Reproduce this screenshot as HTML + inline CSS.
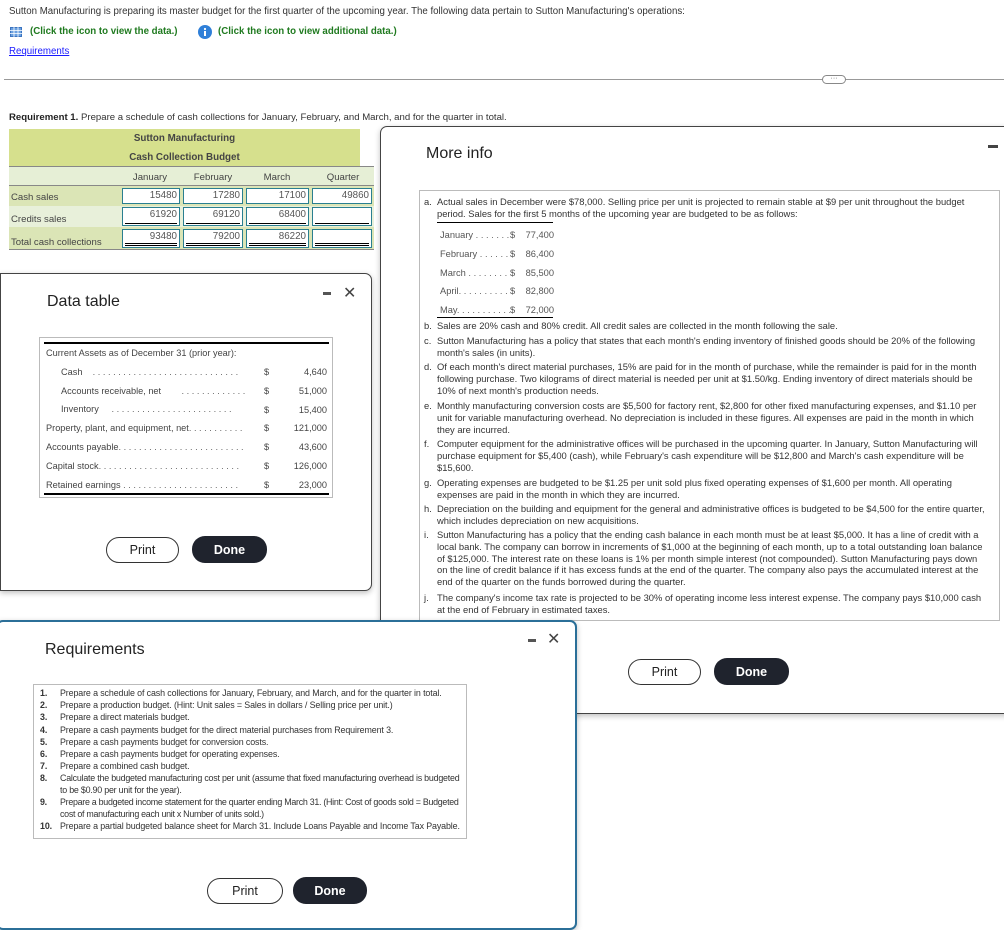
<!DOCTYPE html>
<html><head><meta charset="utf-8">
<style>
*{margin:0;padding:0;box-sizing:border-box}
body{width:1004px;height:912px;overflow:hidden;background:#fff;font-family:"Liberation Sans",Arial,sans-serif;color:#222;position:relative;font-size:9.6px}
.a{position:absolute;white-space:nowrap}
.dlg{position:absolute;background:#fff;border:1px solid #444;border-radius:7px;box-shadow:0 2px 6px rgba(0,0,0,.25)}
.btnp{position:absolute;border:1.5px solid #333;border-radius:13px;background:#fff;display:flex;align-items:center;justify-content:center;font-size:12.5px;color:#222}
.btnd{position:absolute;border-radius:13px;background:#1f232d;color:#fff;display:flex;align-items:center;justify-content:center;font-size:12.5px;font-weight:bold}
.inp{position:absolute;border:1.5px solid #2a7f90;background:#fff;height:16px;text-align:right;padding-right:2px;font-size:9.8px;line-height:13px;color:#555}
.mi{position:absolute;left:424px;width:566px;white-space:normal;line-height:11.8px;font-size:9.4px;color:#333}
.mi b{position:absolute;left:0;font-weight:normal}
.mi span{display:block;margin-left:13px}
.rq{position:absolute;left:40px;width:425px;font-size:8.9px;letter-spacing:-0.12px;line-height:11.9px;color:#333;white-space:nowrap}
.rq b{position:absolute;left:0}
.rq span{display:block;margin-left:20px}
.dots{color:#666}
</style></head><body>

<div class="a" style="left:9px;top:6px;font-size:9.7px;color:#333">Sutton Manufacturing is preparing its master budget for the first quarter of the upcoming year. The following data pertain to Sutton Manufacturing's operations:</div>
<svg class="a" style="left:10px;top:27px" width="12" height="10"><rect x="0.5" y="0.5" width="11" height="9" fill="#6aa0e0" stroke="#3b74c0"/><path d="M0 3.5H12M0 6.5H12M4 0V10M8 0V10" stroke="#fff" stroke-width="0.8"/></svg>
<div class="a" style="left:30px;top:26px;font-size:9.7px;font-weight:bold;color:#1f7a1f">(Click the icon to view the data.)</div>
<svg class="a" style="left:198px;top:25px" width="14" height="14"><circle cx="7" cy="7" r="7" fill="#2f7fd8"/><rect x="6" y="6" width="2" height="5" fill="#fff"/><circle cx="7" cy="4" r="1.1" fill="#fff"/></svg>
<div class="a" style="left:218px;top:26px;font-size:9.7px;font-weight:bold;color:#1f7a1f">(Click the icon to view additional data.)</div>
<div class="a" style="left:9px;top:46px;font-size:9.7px;color:#1a1aff;text-decoration:underline">Requirements</div>
<div class="a" style="left:4px;top:79px;width:1000px;height:1px;background:#999"></div>
<div class="a" style="left:822px;top:75px;width:24px;height:9px;border:1px solid #888;border-radius:5px;background:#fff;font-size:7px;line-height:5px;text-align:center;color:#555">···</div>

<div class="a" style="left:9px;top:112px;font-size:9.6px;color:#333"><b style="color:#222">Requirement 1.</b> Prepare a schedule of cash collections for January, February, and March, and for the quarter in total.</div>

<!-- budget table -->
<div class="a" style="left:9px;top:129px;width:351px;height:37px;background:#d6e08d"></div>
<div class="a" style="left:9px;top:133px;width:351px;text-align:center;font-weight:bold;font-size:9.8px;color:#444">Sutton Manufacturing</div>
<div class="a" style="left:9px;top:152px;width:351px;text-align:center;font-weight:bold;font-size:9.8px;color:#444">Cash Collection Budget</div>
<div class="a" style="left:9px;top:166px;width:365px;height:20px;background:#e6efd6;border-top:1px solid #888;border-bottom:1px solid #888"></div>
<div class="a" style="left:120px;top:172px;width:60px;text-align:center;color:#444">January</div>
<div class="a" style="left:183px;top:172px;width:60px;text-align:center;color:#444">February</div>
<div class="a" style="left:246px;top:172px;width:62px;text-align:center;color:#444">March</div>
<div class="a" style="left:312px;top:172px;width:62px;text-align:center;color:#444">Quarter</div>
<div class="a" style="left:9px;top:186px;width:365px;height:20px;background:#dbe5b6"></div>
<div class="a" style="left:9px;top:206px;width:365px;height:21px;background:#e8f0da"></div>
<div class="a" style="left:9px;top:227px;width:365px;height:23px;background:#dbe5b6;border-bottom:1px solid #888"></div>
<div class="a" style="left:11px;top:192px;color:#444">Cash sales</div>
<div class="a" style="left:11px;top:214px;color:#444">Credits sales</div>
<div class="a" style="left:11px;top:237px;color:#444">Total cash collections</div>
<div class="inp" style="left:122px;top:188px;width:58px">15480</div>
<div class="inp" style="left:183px;top:188px;width:60px">17280</div>
<div class="inp" style="left:246px;top:188px;width:63px">17100</div>
<div class="inp" style="left:312px;top:188px;width:60px">49860</div>
<div class="inp" style="left:122px;top:207px;width:58px;height:19px">61920<div style="position:absolute;left:2px;right:2px;bottom:1px;height:1px;background:#000"></div></div>
<div class="inp" style="left:183px;top:207px;width:60px;height:19px">69120<div style="position:absolute;left:2px;right:2px;bottom:1px;height:1px;background:#000"></div></div>
<div class="inp" style="left:246px;top:207px;width:63px;height:19px">68400<div style="position:absolute;left:2px;right:2px;bottom:1px;height:1px;background:#000"></div></div>
<div class="inp" style="left:312px;top:207px;width:60px;height:19px"><div style="position:absolute;left:2px;right:2px;bottom:1px;height:1px;background:#000"></div></div>
<div class="inp" style="left:122px;top:229px;width:58px;height:19px">93480<div style="position:absolute;left:2px;right:2px;bottom:1px;height:3px;border-top:1px solid #000;border-bottom:1px solid #000"></div></div>
<div class="inp" style="left:183px;top:229px;width:60px;height:19px">79200<div style="position:absolute;left:2px;right:2px;bottom:1px;height:3px;border-top:1px solid #000;border-bottom:1px solid #000"></div></div>
<div class="inp" style="left:246px;top:229px;width:63px;height:19px">86220<div style="position:absolute;left:2px;right:2px;bottom:1px;height:3px;border-top:1px solid #000;border-bottom:1px solid #000"></div></div>
<div class="inp" style="left:312px;top:229px;width:60px;height:19px"><div style="position:absolute;left:2px;right:2px;bottom:1px;height:3px;border-top:1px solid #000;border-bottom:1px solid #000"></div></div>

<!-- More info dialog -->
<div class="dlg" style="left:380px;top:126px;width:640px;height:588px;border-radius:7px 0 0 7px"></div>
<div class="a" style="left:426px;top:145px;font-size:16px;color:#222">More info</div>
<div class="a" style="left:988px;top:145px;width:10px;height:3px;background:#444"></div>
<div class="a" style="left:419px;top:190px;width:581px;height:431px;border:1px solid #bbb"></div>
<div class="mi" style="top:196px"><b>a.</b><span>Actual sales in December were $78,000. Selling price per unit is projected to remain stable at $9 per unit throughout the budget period. Sales for the first 5 months of the upcoming year are budgeted to be as follows:</span></div>
<div class="a" style="left:437px;top:222px;width:116px;height:1px;background:#000"></div>
<div class="a" style="left:440px;top:226px;color:#555;line-height:18.8px;font-size:9.3px">January<span class="dots"> . . . . . . . . .</span><br>February<span class="dots"> . . . . . . . .</span><br>March<span class="dots"> . . . . . . . . . .</span><br>April<span class="dots">. . . . . . . . . . . .</span><br>May<span class="dots">. . . . . . . . . . . .</span></div>
<div class="a" style="left:510px;top:226px;width:12px;background:#fff;color:#555;line-height:18.8px;font-size:9.3px">$<br>$<br>$<br>$<br>$</div>
<div class="a" style="left:522px;top:226px;width:32px;text-align:right;background:#fff;color:#555;line-height:18.8px;font-size:9.3px">77,400<br>86,400<br>85,500<br>82,800<br>72,000</div>
<div class="a" style="left:437px;top:317px;width:116px;height:1px;background:#000"></div>
<div class="mi" style="top:320px"><b>b.</b><span>Sales are 20% cash and 80% credit. All credit sales are collected in the month following the sale.</span></div>
<div class="mi" style="top:335px"><b>c.</b><span>Sutton Manufacturing has a policy that states that each month's ending inventory of finished goods should be 20% of the following month's sales (in units).</span></div>
<div class="mi" style="top:361px"><b>d.</b><span>Of each month's direct material purchases, 15% are paid for in the month of purchase, while the remainder is paid for in the month following purchase. Two kilograms of direct material is needed per unit at $1.50/kg. Ending inventory of direct materials should be 10% of next month's production needs.</span></div>
<div class="mi" style="top:400px"><b>e.</b><span>Monthly manufacturing conversion costs are $5,500 for factory rent, $2,800 for other fixed manufacturing expenses, and $1.10 per unit for variable manufacturing overhead. No depreciation is included in these figures. All expenses are paid in the month in which they are incurred.</span></div>
<div class="mi" style="top:438px"><b>f.</b><span>Computer equipment for the administrative offices will be purchased in the upcoming quarter. In January, Sutton Manufacturing will purchase equipment for $5,400 (cash), while February's cash expenditure will be $12,800 and March's cash expenditure will be $15,600.</span></div>
<div class="mi" style="top:477px"><b>g.</b><span>Operating expenses are budgeted to be $1.25 per unit sold plus fixed operating expenses of $1,600 per month. All operating expenses are paid in the month in which they are incurred.</span></div>
<div class="mi" style="top:503px"><b>h.</b><span>Depreciation on the building and equipment for the general and administrative offices is budgeted to be $4,500 for the entire quarter, which includes depreciation on new acquisitions.</span></div>
<div class="mi" style="top:529px"><b>i.</b><span>Sutton Manufacturing has a policy that the ending cash balance in each month must be at least $5,000. It has a line of credit with a local bank. The company can borrow in increments of $1,000 at the beginning of each month, up to a total outstanding loan balance of $125,000. The interest rate on these loans is 1% per month simple interest (not compounded). Sutton Manufacturing pays down on the line of credit balance if it has excess funds at the end of the quarter. The company also pays the accumulated interest at the end of the quarter on the funds borrowed during the quarter.</span></div>
<div class="mi" style="top:592px"><b>j.</b><span>The company's income tax rate is projected to be 30% of operating income less interest expense. The company pays $10,000 cash at the end of February in estimated taxes.</span></div>
<div class="btnp" style="left:628px;top:659px;width:73px;height:26px">Print</div>
<div class="btnd" style="left:714px;top:658px;width:75px;height:27px">Done</div>

<!-- Data table dialog -->
<div class="dlg" style="left:0;top:273px;width:372px;height:318px;border-radius:0 7px 7px 0"></div>
<div class="a" style="left:47px;top:293px;font-size:16px;color:#222">Data table</div>
<div class="a" style="left:323px;top:292px;width:8px;height:3px;background:#555"></div>
<div class="a" style="left:343px;top:283px;font-size:16px;color:#444">✕</div>
<div class="a" style="left:39px;top:337px;width:294px;height:161px;border:1px solid #bbb"></div>
<div class="a" style="left:44px;top:342px;width:285px;height:1.5px;background:#000"></div>
<div class="a" style="left:44px;top:493px;width:285px;height:1.5px;background:#000"></div>
<div class="a" style="left:46px;top:344px;font-size:9.2px;color:#444;line-height:18.8px">Current Assets as of December 31 (prior year):<br>
<span style="margin-left:15px">Cash</span><span class="dots">&nbsp;&nbsp;&nbsp;&nbsp;. . . . . . . . . . . . . . . . . . . . . . . . . . . . .</span><br>
<span style="margin-left:15px">Accounts receivable, net</span><span class="dots">&nbsp;&nbsp;&nbsp;&nbsp;&nbsp;&nbsp;&nbsp;&nbsp;. . . . . . . . . . . . .</span><br>
<span style="margin-left:15px">Inventory</span><span class="dots">&nbsp;&nbsp;&nbsp;&nbsp;&nbsp;. . . . . . . . . . . . . . . . . . . . . . . .</span><br>
Property, plant, and equipment, net<span class="dots">. . . . . . . . . . .</span><br>
Accounts payable<span class="dots">. . . . . . . . . . . . . . . . . . . . . . . . .</span><br>
Capital stock<span class="dots">. . . . . . . . . . . . . . . . . . . . . . . . . . . .</span><br>
Retained earnings<span class="dots"> . . . . . . . . . . . . . . . . . . . . . . .</span></div>
<div class="a" style="left:264px;top:363px;font-size:9.2px;color:#444;line-height:18.8px">$<br>$<br>$<br>$<br>$<br>$<br>$</div>
<div class="a" style="left:280px;top:363px;width:47px;text-align:right;font-size:9.2px;color:#444;line-height:18.8px">4,640<br>51,000<br>15,400<br>121,000<br>43,600<br>126,000<br>23,000</div>
<div class="btnp" style="left:106px;top:537px;width:73px;height:26px">Print</div>
<div class="btnd" style="left:192px;top:536px;width:75px;height:27px">Done</div>

<!-- Requirements dialog -->
<div class="dlg" style="left:-4px;top:620px;width:581px;height:310px;border:2px solid #2b6f98;border-radius:7px"></div>
<div class="a" style="left:45px;top:641px;font-size:16px;color:#222">Requirements</div>
<div class="a" style="left:528px;top:639px;width:8px;height:3px;background:#555"></div>
<div class="a" style="left:547px;top:629px;font-size:16px;color:#444">✕</div>
<div class="a" style="left:33px;top:684px;width:434px;height:155px;border:1px solid #bbb"></div>
<div class="rq" style="top:688px"><b>1.</b><span>Prepare a schedule of cash collections for January, February, and March, and for the quarter in total.</span></div>
<div class="rq" style="top:700px"><b>2.</b><span>Prepare a production budget. (Hint: Unit sales = Sales in dollars / Selling price per unit.)</span></div>
<div class="rq" style="top:712px"><b>3.</b><span>Prepare a direct materials budget.</span></div>
<div class="rq" style="top:725px"><b>4.</b><span>Prepare a cash payments budget for the direct material purchases from Requirement 3.</span></div>
<div class="rq" style="top:737px"><b>5.</b><span>Prepare a cash payments budget for conversion costs.</span></div>
<div class="rq" style="top:749px"><b>6.</b><span>Prepare a cash payments budget for operating expenses.</span></div>
<div class="rq" style="top:761px"><b>7.</b><span>Prepare a combined cash budget.</span></div>
<div class="rq" style="top:773px;letter-spacing:-0.22px"><b>8.</b><span>Calculate the budgeted manufacturing cost per unit (assume that fixed manufacturing overhead is budgeted<br>to be $0.90 per unit for the year).</span></div>
<div class="rq" style="top:797px;letter-spacing:-0.28px"><b>9.</b><span>Prepare a budgeted income statement for the quarter ending March 31. (Hint: Cost of goods sold = Budgeted<br>cost of manufacturing each unit x Number of units sold.)</span></div>
<div class="rq" style="top:821px"><b>10.</b><span>Prepare a partial budgeted balance sheet for March 31. Include Loans Payable and Income Tax Payable.</span></div>
<div class="btnp" style="left:207px;top:878px;width:76px;height:26px">Print</div>
<div class="btnd" style="left:293px;top:877px;width:74px;height:27px">Done</div>

</body></html>
